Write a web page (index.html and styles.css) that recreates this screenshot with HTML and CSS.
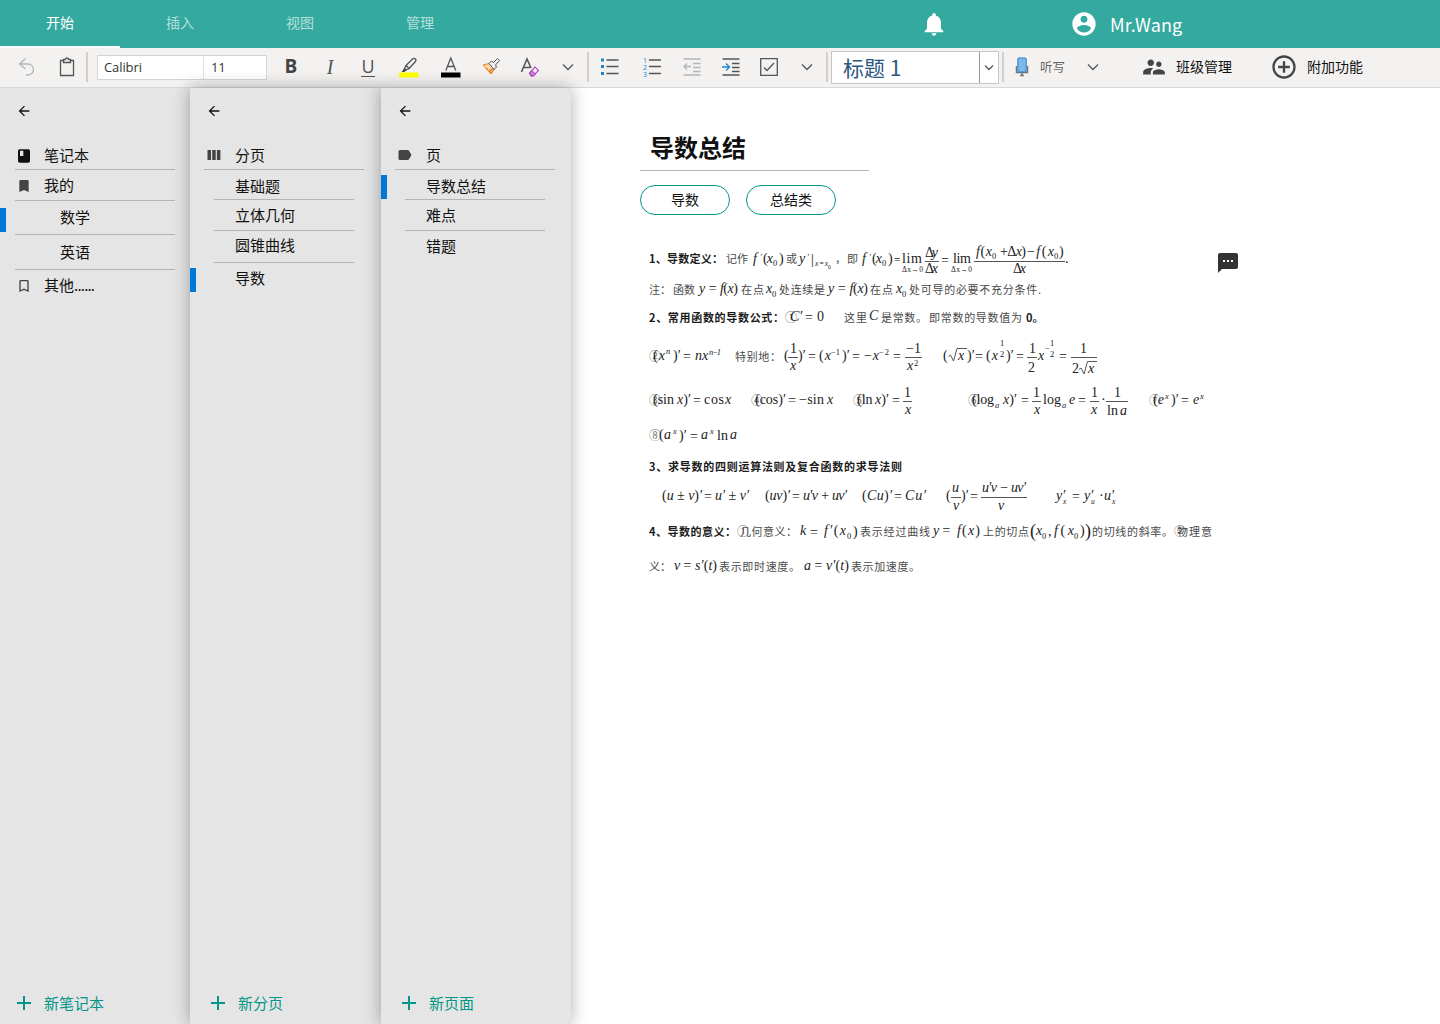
FILE: index.html
```html
<!DOCTYPE html>
<html lang="zh-CN">
<head>
<meta charset="utf-8">
<title>导数总结</title>
<link rel="stylesheet" href="styles.css">
</head>
<body>
<header class="topbar">
  <nav class="tabs">
    <a class="tab active">开始</a><a class="tab">插入</a><a class="tab">视图</a><a class="tab">管理</a>
  </nav>
  <svg class="bell" width="28" height="28" viewBox="0 0 24 24"><path d="M12 22c1.1 0 2-.9 2-2h-4c0 1.1.9 2 2 2zm6-6v-5c0-3.07-1.63-5.64-4.5-6.32V4c0-.83-.67-1.5-1.5-1.5s-1.500.67-1.500 1.500v.68C7.640 5.360 6 7.920 6 11v5l-2 2v1h16v-1l-2-2z"/></svg>
  <div class="user">
    <svg width="28" height="28" viewBox="0 0 24 24"><path d="M12 2C6.480 2 2 6.480 2 12s4.480 10 10 10 10-4.480 10-10S17.520 2 12 2zm0 3c1.660 0 3 1.340 3 3s-1.340 3-3 3-3-1.340-3-3 1.340-3 3-3zm0 14.200c-2.500 0-4.710-1.280-6-3.220.03-1.990 4-3.080 6-3.080 1.990 0 5.970 1.090 6 3.080-1.290 1.940-3.500 3.220-6 3.220z"/></svg>
    <span>Mr.Wang</span>
  </div>
</header>

<div class="toolbar">
  <span class="tool w40"><svg width="20" height="20" viewBox="0 0 20 20" class="ln faint"><path d="M8.500 1.500 2.500 7l6 5M2.500 7h8.500a5.500 5.500 0 0 1 0 11H9"/></svg></span>
  <span class="tool w39"><svg width="16" height="20" viewBox="0 0 16 20" class="ln"><path d="M4.500 3.500h-3v15h13v-15h-3M4.500 5.500v-3h2a1.500 1.500 0 0 1 3 0h2v3z"/></svg></span>
  <span class="sep"></span>
  <div class="fontbox"><span class="fname">Calibri</span><span class="fsize">11</span></div>
  <span class="tool w40 bold">B</span>
  <span class="tool w38 ital">I</span>
  <span class="tool w38"><span class="under">U</span></span>
  <span class="tool w44"><svg width="20" height="22" viewBox="0 0 20 22"><path d="M0 16.500h19.500v5H0z" fill="#ff0"/><path class="ln" d="M7 9.500 13.500 3a1.800 1.800 0 0 1 3 2.500L10 12.500zM7 9.500l-1.500 3L7 14l3-1.500" /><path d="m5.500 12-3 4h3l2-2z" fill="#444"/></svg></span>
  <span class="tool w40"><svg width="20" height="22" viewBox="0 0 20 22"><path d="M0 16.500h19.500v5H0z" fill="#000"/><path class="ln" d="M4.800 14.500 9.800 2l5 12.500M6.500 10.500h6.600"/></svg></span>
  <span class="tool w40"><svg width="20" height="20" viewBox="0 0 20 20"><path d="m2 8 6-1.500 5.500 5.500-3.500 5z" fill="#fbd9a6" stroke="#e8852b"/><path d="m5 13 2-2M7.500 15l2-2M10 17l3-5-5 1z" stroke="#e8852b" fill="#f7b155"/><path d="m8 6.500 2.500-2.500 2 1.500 4-4 2 2-4 4.500 1 2-2.500 2.500z" fill="#eee" stroke="#555"/></svg></span>
  <span class="tool w38"><svg width="20" height="20" viewBox="0 0 20 20"><path class="ln thick" d="M1.500 15 7 2l4 9M3.500 10.500h6.500"/><path d="m9.500 16 5.500-6 3.500 3.500-5.500 5.500H11z" fill="#fff" stroke="#b146c2" stroke-width="1.200"/><path d="m9.500 16 2.500-2.500 3.500 3.500-2 2H11z" fill="#c77dd3" stroke="#b146c2"/></svg></span>
  <span class="tool w38"><svg width="12" height="8" viewBox="0 0 12 8" class="ln"><path d="m1 1.500 5 5 5-5"/></svg></span>
  <span class="sep"></span>
  <span class="tool w40"><svg width="20" height="20" viewBox="0 0 20 20"><path d="M2 1.500h3v3H2zM2 8h3v3H2zM2 15h3v3H2z" fill="#2284c9"/><path class="ln" d="M7.500 3h12M7.500 9.500h12M7.500 16.500h12"/></svg></span>
  <span class="tool w40 gap3"><svg width="20" height="22" viewBox="0 0 20 22"><g class="digits"><text x="1" y="7">1</text><text x="1" y="14">2</text><text x="1" y="21">3</text></g><path class="ln" d="M7 4h12M7 10.500h12M7 17.500h12"/></svg></span>
  <span class="tool w40"><svg width="20" height="20" viewBox="0 0 20 20" class="ln faint"><path d="M1.500 2h17M11 6.500h7.500M11 10.500h7.500M11 14.500h7.500M1.500 18h17M9 9.500H2M5 6.500l-3 3 3 3"/></svg></span>
  <span class="tool w38"><svg width="20" height="20" viewBox="0 0 20 20"><path class="ln" d="M1.500 2h17M11 6.500h7.500M11 10.500h7.500M11 14.500h7.500M1.500 18h17"/><path d="M1 10h7M5 6.500 8.500 10 5 13.500" fill="none" stroke="#2284c9" stroke-width="1.300"/></svg></span>
  <span class="tool w38"><svg width="18" height="18" viewBox="0 0 18 18" class="ln"><path d="M.7.7h16.600v16.600H.7zM4 9.500l3 3 7-7.500"/></svg></span>
  <span class="tool w38"><svg width="12" height="8" viewBox="0 0 12 8" class="ln"><path d="m1 1.500 5 5 5-5"/></svg></span>
  <span class="sep"></span>
  <div class="stylebox"><span class="sname">标题 1</span><span class="sdrop"><svg width="10" height="7" viewBox="0 0 10 7" class="ln"><path d="m1 1.500 4 4 4-4"/></svg></span></div>
  <span class="sep gap3"></span>
  <svg class="mic" width="14" height="20" viewBox="0 0 14 20"><path d="M1.500 9v6.500h11V9M5 18.500h4M7 15v3" fill="none" stroke="#777" stroke-width="1.500"/><rect x="2.800" y="1" width="8.400" height="14" rx="1" fill="#7db9ea" stroke="#2f7fc4"/></svg>
  <span class="dictate">听写</span>
  <svg class="micdrop ln" width="12" height="8" viewBox="0 0 12 8"><path d="m1 1.500 5 5 5-5"/></svg>
  <svg class="people" width="26" height="26" viewBox="0 0 24 24"><path d="M16.500 12c1.380 0 2.490-1.120 2.490-2.500S17.880 7 16.500 7 14 8.120 14 9.500s1.120 2.500 2.500 2.500zM9 11c1.660 0 2.990-1.340 2.990-3S10.660 5 9 5 6 6.340 6 8s1.340 3 3 3zm7.500 3c-1.830 0-5.500.92-5.500 2.750V19h11v-2.250c0-1.830-3.670-2.750-5.500-2.750zM9 13c-2.330 0-7 1.170-7 3.500V19h7v-2.250c0-.85.33-2.340 2.370-3.470C10.500 13.100 9.660 13 9 13z"/></svg>
  <span class="action">班级管理</span>
  <svg class="addcirc" width="28" height="28" viewBox="0 0 24 24"><path d="M13 7h-2v4H7v2h4v4h2v-4h4v-2h-4V7zm-1-5C6.480 2 2 6.480 2 12s4.480 10 10 10 10-4.480 10-10S17.520 2 12 2zm0 18c-4.410 0-8-3.590-8-8s3.590-8 8-8 8 3.590 8 8-3.590 8-8 8z"/></svg>
  <span class="action">附加功能</span>
</div>

<main class="workspace">
  <aside class="panel p1">
    <svg class="back" width="16" height="16" viewBox="0 0 24 24"><path d="M20 11H7.830l5.590-5.590L12 4l-8 8 8 8 1.410-1.410L7.830 13H20v-2z"/></svg>
    <div class="row h29"><svg class="ico" width="16" height="16" viewBox="0 0 24 24"><path fill="#111" d="M18 2H6C4.500 2 3 3 3 4.500v15C3 21 4.500 22 6 22h12c1.500 0 3-1 3-2.500v-15C21 3 19.500 2 18 2zM6 4h5v8H6z"/></svg><span>笔记本</span></div>
    <div class="row h31"><svg class="ico" width="16" height="16" viewBox="0 0 24 24"><path d="M17 3H7c-1.100 0-2 .9-2 2v16l7-3 7 3V5c0-1.100-.9-2-2-2z"/></svg><span>我的</span></div>
    <div class="row h34 sub cur"><span>数学</span></div>
    <div class="row h35 sub"><span>英语</span></div>
    <div class="row h31 last"><svg class="ico" width="16" height="16" viewBox="0 0 24 24"><path d="M17 3H7c-1.100 0-2 .9-2 2v16l7-3 7 3V5c0-1.100-.9-2-2-2zm0 15-5-2.180L7 18V5h10v13z"/></svg><span>其他<span class="dots">......</span></span></div>
    <div class="new"><svg width="14" height="14" viewBox="0 0 14 14"><path d="M6 0h2v6h6v2H8v6H6V8H0V6h6z"/></svg><span>新笔记本</span></div>
  </aside>
  <aside class="panel p2">
    <svg class="back" width="16" height="16" viewBox="0 0 24 24"><path d="M20 11H7.830l5.590-5.590L12 4l-8 8 8 8 1.410-1.410L7.830 13H20v-2z"/></svg>
    <div class="row h29"><svg class="ico" width="14" height="10" viewBox="0 0 14 10"><path d="M.5 0h3.500v10H.5zM5.200 0h3.500v10H5.200zM9.900 0h3.500v10H9.900z"/></svg><span>分页</span></div>
    <div class="row h30 item low"><span>基础题</span></div>
    <div class="row h31 item"><span>立体几何</span></div>
    <div class="row h32 item high"><span>圆锥曲线</span></div>
    <div class="row h31 item last cur"><span>导数</span></div>
    <div class="new"><svg width="14" height="14" viewBox="0 0 14 14"><path d="M6 0h2v6h6v2H8v6H6V8H0V6h6z"/></svg><span>新分页</span></div>
  </aside>
  <aside class="panel p3">
    <svg class="back" width="16" height="16" viewBox="0 0 24 24"><path d="M20 11H7.830l5.590-5.590L12 4l-8 8 8 8 1.410-1.410L7.830 13H20v-2z"/></svg>
    <div class="row h29"><svg class="ico" width="14" height="10" viewBox="0 0 14 10"><path d="M2 0h7.500q1 0 1.500.8L13.500 5 11 9.200q-.5.800-1.500.8H2Q.5 10 .5 8.500v-7Q.5 0 2 0z"/></svg><span>页</span></div>
    <div class="row h30 item low cur"><span>导数总结</span></div>
    <div class="row h31 item"><span>难点</span></div>
    <div class="row h30 item last"><span>错题</span></div>
    <div class="new"><svg width="14" height="14" viewBox="0 0 14 14"><path d="M6 0h2v6h6v2H8v6H6V8H0V6h6z"/></svg><span>新页面</span></div>
  </aside>

  <article class="page">
    <h1>导数总结</h1>
    <div class="tags"><span class="tag">导数</span><span class="tag">总结类</span></div>
    <div class="body">
    <div class="note">
      <svg class="eq" width="600" height="40" viewBox="640 240 600 40">
        <text class="h" x="649" y="263" textLength="74">1、导数定义：</text>
        <text x="726" y="263" textLength="22">记作</text>
        <text class="m" x="753" y="263">f</text><text class="m s" x="760" y="260">′</text><text class="m" x="763" y="263" textLength="10"><tspan>(</tspan>x</text><text class="r s" x="773" y="266">0</text><text class="r" x="779" y="263">)</text>
        <text x="786" y="263">或</text><text class="m" x="799" y="263">y</text><text class="m s" x="807" y="260">′</text><text class="r" x="811" y="264">|</text><text class="m t" x="815" y="266" textLength="13">x=x</text><text class="r u" x="828" y="269">0</text>
        <text x="835" y="263">，</text><text x="847" y="263">即</text>
        <text class="m" x="862" y="263">f</text><text class="m s" x="869" y="260">′</text><text class="m" x="872" y="263" textLength="10"><tspan>(</tspan>x</text><text class="r s" x="882" y="266">0</text><text class="r" x="888" y="263">)</text><text class="r k" x="894" y="263">=</text>
        <text class="r" x="902" y="263" textLength="20">lim</text><text class="r t" x="902" y="272" textLength="21">Δx→0</text>
        <text class="m" x="925" y="257" textLength="13"><tspan>Δ</tspan>y</text><path d="M925 261.500h14"/><text class="m" x="925" y="273" textLength="13"><tspan>Δ</tspan>x</text>
        <text class="r" x="941" y="265">=</text><text class="r" x="953" y="263" textLength="18">lim</text><text class="r t" x="951" y="272" textLength="21">Δx→0</text>
        <text class="m" x="976" y="256" textLength="16">f<tspan>(</tspan>x</text><text class="r s" x="992" y="259">0</text><text class="m" x="1000" y="256" textLength="26"><tspan>+Δ</tspan>x<tspan>)</tspan></text><text class="m" x="1027" y="256" textLength="27"><tspan>−</tspan>f<tspan>(</tspan>x</text><text class="r s" x="1054" y="259">0</text><text class="r" x="1059" y="256">)</text>
        <path d="M974 261.500h91"/><text class="m" x="1013" y="273" textLength="13"><tspan>Δ</tspan>x</text><text class="r" x="1065" y="263">.</text>
      </svg>
      <svg class="eq" width="600" height="22" viewBox="640 280 600 22">
        <text x="649" y="293.500">注：</text><text x="673" y="293.500" textLength="22">函数</text><text class="m" x="699" y="293" textLength="39">y = f<tspan>(</tspan>x<tspan>)</tspan></text><text x="741" y="293.500" textLength="23">在点</text><text class="m" x="766" y="293">x</text><text class="r s" x="772" y="297">0</text><text x="779" y="293.500" textLength="46">处连续是</text><text class="m" x="828" y="293" textLength="40">y = f<tspan>(</tspan>x<tspan>)</tspan></text><text x="870" y="293.500" textLength="23">在点</text><text class="m" x="896" y="293">x</text><text class="r s" x="902" y="297">0</text><text x="909" y="293.500" textLength="132">处可导的必要不充分条件.</text>
      </svg>
      <svg class="eq" width="600" height="30" viewBox="640 302 600 30">
        <text class="h" x="649" y="321.500" textLength="135">2、常用函数的导数公式：</text><text class="c" x="785" y="321.500">①</text><text class="m" x="790" y="321">C′</text><text class="r" x="805" y="322">=</text><text class="r" x="817" y="321">0</text><text x="844" y="321.500" textLength="23">这里</text><text class="m" x="869" y="320">C</text><text x="881" y="321.500" textLength="46">是常数。</text><text x="929" y="321.500" textLength="93">即常数的导数值为</text><text class="h" x="1026" y="321.500">0。</text>
      </svg>
      <svg class="eq" width="600" height="48" viewBox="640 332 600 48">
        <text class="c" x="649" y="361">②</text><text class="m" x="653" y="360" textLength="12"><tspan>(</tspan>x</text><text class="m s" x="666" y="354">n</text><text class="r" x="673" y="360">)′</text><text class="r" x="683" y="361">=</text><text class="m" x="695" y="360">nx</text><text class="m s" x="709" y="355" textLength="12">n−1</text>
        <text x="735" y="361" textLength="46">特别地：</text>
        <text class="r" x="784" y="360">(</text><text class="r" x="790" y="353">1</text><path d="M788 357.500h10"/><text class="m" x="790" y="370">x</text><text class="r" x="798" y="360">)′</text><text class="r" x="808" y="361">=</text><text class="m" x="819" y="360" textLength="12"><tspan>(</tspan>x</text><text class="r s" x="831" y="355" textLength="9">−1</text><text class="r" x="842" y="360">)′</text><text class="r" x="852" y="361">=</text><text class="m" x="864" y="360" textLength="15"><tspan>−</tspan>x</text><text class="r s" x="879" y="355" textLength="10">−2</text><text class="r" x="893" y="361">=</text><text class="r" x="906" y="353" textLength="15">−1</text><path d="M905 357.500h17"/><text class="m" x="907" y="370">x</text><text class="r s" x="914" y="366">2</text>
        <text class="r" x="943" y="360">(</text><path class="rad" d="m948.500 356.500 2-1.500 3 6 3.500-12.500h10"/><text class="m" x="958" y="360">x</text><text class="r" x="967" y="360">)′</text><text class="r" x="975" y="361">=</text><text class="m" x="986" y="360" textLength="12"><tspan>(</tspan>x</text><text class="r s" x="1000" y="346">1</text><text class="r s" x="1000" y="357">2</text><text class="r" x="1006" y="360">)′</text><text class="r" x="1016" y="361">=</text><text class="r" x="1029" y="353">1</text><path d="M1027 357.500h10"/><text class="r" x="1028" y="372">2</text><text class="m" x="1038" y="360">x</text><text class="r s" x="1045" y="351">−</text><text class="r s" x="1050" y="346">1</text><text class="r s" x="1050" y="357">2</text><text class="r" x="1059" y="361">=</text><text class="r" x="1080" y="353">1</text><path d="M1071 357.500h26"/><text class="r" x="1072" y="373">2</text><path class="rad" d="m1079 369.500 2-1.500 3 6 3.500-12.500h9.500"/><text class="m" x="1088" y="373">x</text>
      </svg>
      <svg class="eq" width="600" height="42" viewBox="640 380 600 42">
        <text class="c" x="649" y="405">③</text><text class="r" x="653" y="404">(sin</text><text class="m" x="677" y="404">x<tspan>)′</tspan></text><text class="r" x="693" y="405">=</text><text class="r" x="704" y="404" textLength="20">cos</text><text class="m" x="725" y="404">x</text>
        <text class="c" x="751" y="405">④</text><text class="r" x="755" y="404" textLength="31">(cos)′</text><text class="r" x="788" y="405">=</text><text class="r" x="799" y="404" textLength="25">−sin</text><text class="m" x="827" y="404">x</text>
        <text class="c" x="853" y="405">⑤</text><text class="r" x="857" y="404">(ln</text><text class="m" x="875" y="404">x<tspan>)′</tspan></text><text class="r" x="892" y="405">=</text><text class="r" x="904" y="397">1</text><path d="M903 401.500h9"/><text class="m" x="905" y="414">x</text>
        <text class="c" x="968" y="405">⑥</text><text class="r" x="972" y="404" textLength="22">(log</text><text class="m s" x="995" y="408">a</text><text class="m" x="1003" y="404">x<tspan>)′</tspan></text><text class="r" x="1021" y="405">=</text><text class="r" x="1033" y="397">1</text><path d="M1032 401.500h9"/><text class="m" x="1034" y="414">x</text><text class="r" x="1043" y="404" textLength="18">log</text><text class="m s" x="1062" y="408">a</text><text class="m" x="1069" y="404">e</text><text class="r" x="1078" y="405">=</text><text class="r" x="1091" y="397">1</text><path d="M1090 401.500h9"/><text class="m" x="1091" y="414">x</text><text class="r" x="1101" y="404">·</text><text class="r" x="1114" y="397">1</text><path d="M1106 401.500h22"/><text class="r" x="1107" y="415">ln</text><text class="m" x="1120" y="415">a</text>
        <text class="c" x="1149" y="405">⑦</text><text class="m" x="1153" y="404" textLength="11"><tspan>(</tspan>e</text><text class="m s" x="1165" y="399">x</text><text class="r" x="1171" y="404">)′</text><text class="r" x="1181" y="405">=</text><text class="m" x="1193" y="404">e</text><text class="m s" x="1200" y="399">x</text>
      </svg>
      <svg class="eq" width="600" height="32" viewBox="640 422 600 32">
        <text class="c" x="649" y="440">⑧</text><text class="m" x="659" y="439" textLength="12"><tspan>(</tspan>a</text><text class="m s" x="673" y="434">x</text><text class="r" x="679" y="440">)′</text><text class="r" x="690" y="441">=</text><text class="m" x="701" y="439">a</text><text class="m s" x="710" y="434">x</text><text class="r" x="717" y="440">ln</text><text class="m" x="730" y="439">a</text>
      </svg>
      <svg class="eq" width="600" height="22" viewBox="640 454 600 22">
        <text class="h" x="649" y="471" textLength="253">3、求导数的四则运算法则及复合函数的求导法则</text>
      </svg>
      <svg class="eq" width="600" height="42" viewBox="640 476 600 42">
        <text class="m" x="662" y="500" textLength="40"><tspan>(</tspan>u ± v<tspan>)</tspan>′</text><text class="r" x="704" y="501">=</text><text class="m" x="715" y="500" textLength="34">u′ ± v′</text><text class="m" x="765" y="500" textLength="25"><tspan>(</tspan>uv<tspan>)</tspan>′</text><text class="r" x="792" y="501">=</text><text class="m" x="803" y="500" textLength="44">u′v + uv′</text><text class="m" x="862" y="500" textLength="30"><tspan>(</tspan>Cu<tspan>)</tspan>′</text><text class="r" x="894" y="501">=</text><text class="m" x="905" y="500" textLength="21">Cu′</text>
        <text class="r" x="946" y="500">(</text><text class="m" x="952" y="492">u</text><path d="M951 497.500h10"/><text class="m" x="953" y="510">v</text><text class="r" x="961" y="500">)′</text><text class="r" x="970" y="501">=</text><text class="m" x="982" y="492" textLength="44">u′v − uv′</text><path d="M981 497.500h46"/><text class="m" x="998" y="510">v</text>
        <text class="m" x="1056" y="500">y′</text><text class="m t" x="1063" y="504">x</text><text class="r" x="1072" y="501">=</text><text class="m" x="1084" y="500">y′</text><text class="m t" x="1091" y="504">u</text><text class="r" x="1099" y="500">·</text><text class="m" x="1104" y="500">u′</text><text class="m t" x="1112" y="504">x</text>
      </svg>
      <svg class="eq" width="600" height="34" viewBox="640 518 600 34">
        <text class="h" x="649" y="536" textLength="87">4、导数的意义：</text><text class="c" x="737" y="536">①</text><text x="740" y="536" textLength="57">几何意义：</text><text class="m" x="800" y="535">k</text><text class="r" x="810" y="537">=</text><text class="m" x="824" y="535" textLength="22">f′<tspan>(</tspan>x</text><text class="r s" x="847" y="539">0</text><text class="r" x="853" y="536">)</text><text x="860" y="536" textLength="70">表示经过曲线</text><text class="m" x="933" y="535" textLength="18">y =</text><text class="m" x="957" y="535" textLength="23">f<tspan>(</tspan>x<tspan>)</tspan></text><text x="983" y="536" textLength="46">上的切点</text><text class="r big" x="1030" y="537">(</text><text class="m" x="1036" y="535">x</text><text class="r s" x="1042" y="539">0</text><text class="r" x="1048" y="536">,</text><text class="m" x="1054" y="535" textLength="20">f<tspan>(</tspan>x</text><text class="r s" x="1074" y="539">0</text><text class="r" x="1080" y="535">)</text><text class="r big" x="1085" y="537">)</text><text x="1092" y="536" textLength="81">的切线的斜率。</text><text class="c" x="1174" y="536">②</text><text x="1177" y="536" textLength="35">物理意</text>
      </svg>
      <svg class="eq" width="600" height="30" viewBox="640 552 600 30">
        <text x="649" y="571">义：</text><text class="m" x="674" y="570" textLength="18">v =</text><text class="m" x="695" y="570" textLength="22">s′<tspan>(</tspan>t<tspan>)</tspan></text><text x="719" y="571" textLength="81">表示即时速度。</text><text class="m" x="804" y="570" textLength="19">a =</text><text class="m" x="826" y="570" textLength="23">v′<tspan>(</tspan>t<tspan>)</tspan></text><text x="851" y="571" textLength="69">表示加速度。</text>
      </svg>
    </div>
    <svg class="comment" width="24" height="24" viewBox="0 0 24 24"><path d="M20 2H4c-1.100 0-2 .9-2 2v18l4-4h14c1.100 0 2-.9 2-2V4c0-1.100-.9-2-2-2zM9 11H7V9h2v2zm4 0h-2V9h2v2zm4 0h-2V9h2v2z"/></svg>
    </div>
  </article>
</main>
</body>
</html>
```
FILE: styles.css
```css
* { box-sizing: border-box; }
body {
  margin: 0;
  width: 1440px;
  height: 1024px;
  overflow: hidden;
  display: flex;
  flex-direction: column;
  background: #fff;
  color: #111;
  font-family: "Noto Sans CJK SC", "Noto Sans", sans-serif;
}
svg { display: block; flex: none; }

/* top bar */
.topbar { display: flex; height: 48px; flex: none; background: #34a9a0; color: #fff; }
.tabs { display: flex; }
.tab { width: 120px; height: 48px; font-size: 14px; line-height: 44px; text-align: center; color: #b5e0dc; }
.tab.active { color: #fff; border-bottom: 2px solid #fff; }
.bell { margin: 10px 0 0 440px; fill: #fff; }
.user { display: flex; align-items: center; height: 48px; margin-left: 122px; gap: 12px; font-size: 18px; line-height: 48px; letter-spacing: .1px; }
.user svg { fill: #fff; }

/* ribbon */
.toolbar { display: flex; align-items: center; flex: none; height: 40px; padding: 0 0 1px 7px; background: #f3f2f1; border-bottom: 1px solid #d9d8d8; }
.tool { display: flex; align-items: center; justify-content: center; flex: none; height: 38px; }
.w38 { width: 38px; } .w39 { width: 39px; } .w40 { width: 40px; } .w44 { width: 44px; }
.gap3 { margin-left: 3px; }
.ln { fill: none; stroke: #555; stroke-width: 1.3; }
.thick { stroke-width: 1.6; }
.faint { stroke: #b5b5b5; }
.sep { flex: none; width: 2px; height: 30px; background: #d2d0ce; }
.fontbox { display: flex; flex: none; width: 170px; height: 25px; margin: 0 4px 0 9px; border: 1px solid #d5d5d5; background: #fff; font: 13px/22px "Open Sans", sans-serif; letter-spacing: -.1px; color: #333; }
.fname { width: 106px; padding-left: 6px; border-right: 1px solid #e1e1e1; }
.fsize { padding-left: 7px; }
.bold { padding-bottom: 2px; font: 700 19px "Open Sans", sans-serif; color: #444; }
.ital { font: italic 20px "Liberation Serif", serif; color: #555; }
.under { height: 19px; border-bottom: 1px solid #555; font: 18px/17px "Open Sans", sans-serif; color: #555; }
.digits { font: 7px "Open Sans", sans-serif; fill: #2284c9; }
.stylebox { display: flex; flex: none; width: 168px; height: 33px; margin-left: 3px; border: 1px solid #c8c6c4; background: #fff; }
.sname { width: 148px; padding-left: 11px; border-right: 1px solid #999; font-size: 21px; line-height: 30px; color: #2b5680; }
.sdrop { display: flex; flex: 1; align-items: center; justify-content: center; }
.mic { margin-left: 11px; }
.dictate { width: 26px; margin-left: 11px; padding-bottom: 2px; font-size: 12.5px; color: #666; white-space: nowrap; }
.micdrop { margin-left: 21px; }
.people { margin-left: 42px; fill: #444; }
.addcirc { margin-left: 38px; fill: #444; }
.action { margin-left: 9px; padding-bottom: 3px; font-size: 14px; white-space: nowrap; }

/* navigation panels */
.workspace { display: flex; flex: 1; }
.panel { display: flex; flex-direction: column; flex: none; width: 190px; background: #e5e5e5; font-size: 15px; }
.p2, .p3 { position: relative; box-shadow: 0 0 16px rgba(0, 0, 0, .32); }
.p2 { width: 191px; }
.back { margin: 15px 0 22px 16px; fill: #111; }
.row { display: flex; align-items: center; position: relative; color: #111; white-space: nowrap; }
.row > span { padding-bottom: 3px; }
.item > span { padding-bottom: 2px; }
.row::after { content: ""; position: absolute; left: 15px; bottom: 0; width: 160px; height: 1px; background: #b4b4b4; }
.row.last::after { display: none; }
.h29 { height: 29px; } .h30 { height: 30px; } .h31 { height: 31px; } .h32 { height: 32px; } .h34 { height: 34px; } .h35 { height: 35px; }
.ico { margin: 0 12px 0 16px; fill: #444; }
.p2 .ico, .p3 .ico { margin: -2px 14px 0 17px; }
.p2 .row::after, .p3 .row::after { left: 14px; }
.sub { padding-left: 60px; }
.item { padding-left: 45px; }
.p2 .item::after, .p3 .item::after { left: 24px; width: 140px; }
.low { padding-top: 3px; }
.high { padding-bottom: 3px; }
.cur::before { content: ""; position: absolute; left: 0; top: 5px; width: 6px; height: 24px; background: #0078d7; }
.sub.cur::before { top: 7px; }
.dots { letter-spacing: -.8px; }
.p1 .sub.cur::before { top: 7px; }
.new { display: flex; align-items: center; gap: 13px; height: 30px; margin: auto 0 6px 17px; color: #009688; }
.new span { padding-bottom: 2px; }
.new svg { fill: #009688; }
.p2 .new, .p3 .new { margin-left: 21px; }

/* note page */
.page { flex: 1; padding: 41px 0 0 69px; }
h1 { width: 229px; height: 42px; margin: 0 0 14px; padding-left: 10px; border-bottom: 1px solid #b4b4b4; font-size: 24px; line-height: 35px; font-weight: 700; }
.tags { display: flex; gap: 16px; }
.tag { width: 90px; height: 30px; border: 1px solid #009688; border-radius: 15px; font-size: 14px; line-height: 27px; text-align: center; }
.body { display: flex; margin-top: 25px; }
.note { width: 576px; }
.comment { margin-top: 11px; fill: #333; }

/* formula lines */
.eq { font-size: 11px; fill: #4a4a4a; }
.eq path { fill: none; stroke: #555; stroke-width: 1; }
.h { font-weight: 700; fill: #1c1c1c; }
.m { font: italic 14px "Liberation Serif", serif; fill: #222; }
.m tspan { font-style: normal; }
.r { font: 14px "Liberation Serif", serif; fill: #222; }
.s { font-size: 8.5px; }
.t { font-size: 7.5px; }
.u { font-size: 5.5px; }
.k { font-size: 11px; font-weight: 700; }
.big { font-size: 18px; }
.c { font-size: 12px; fill: #777; }
```
